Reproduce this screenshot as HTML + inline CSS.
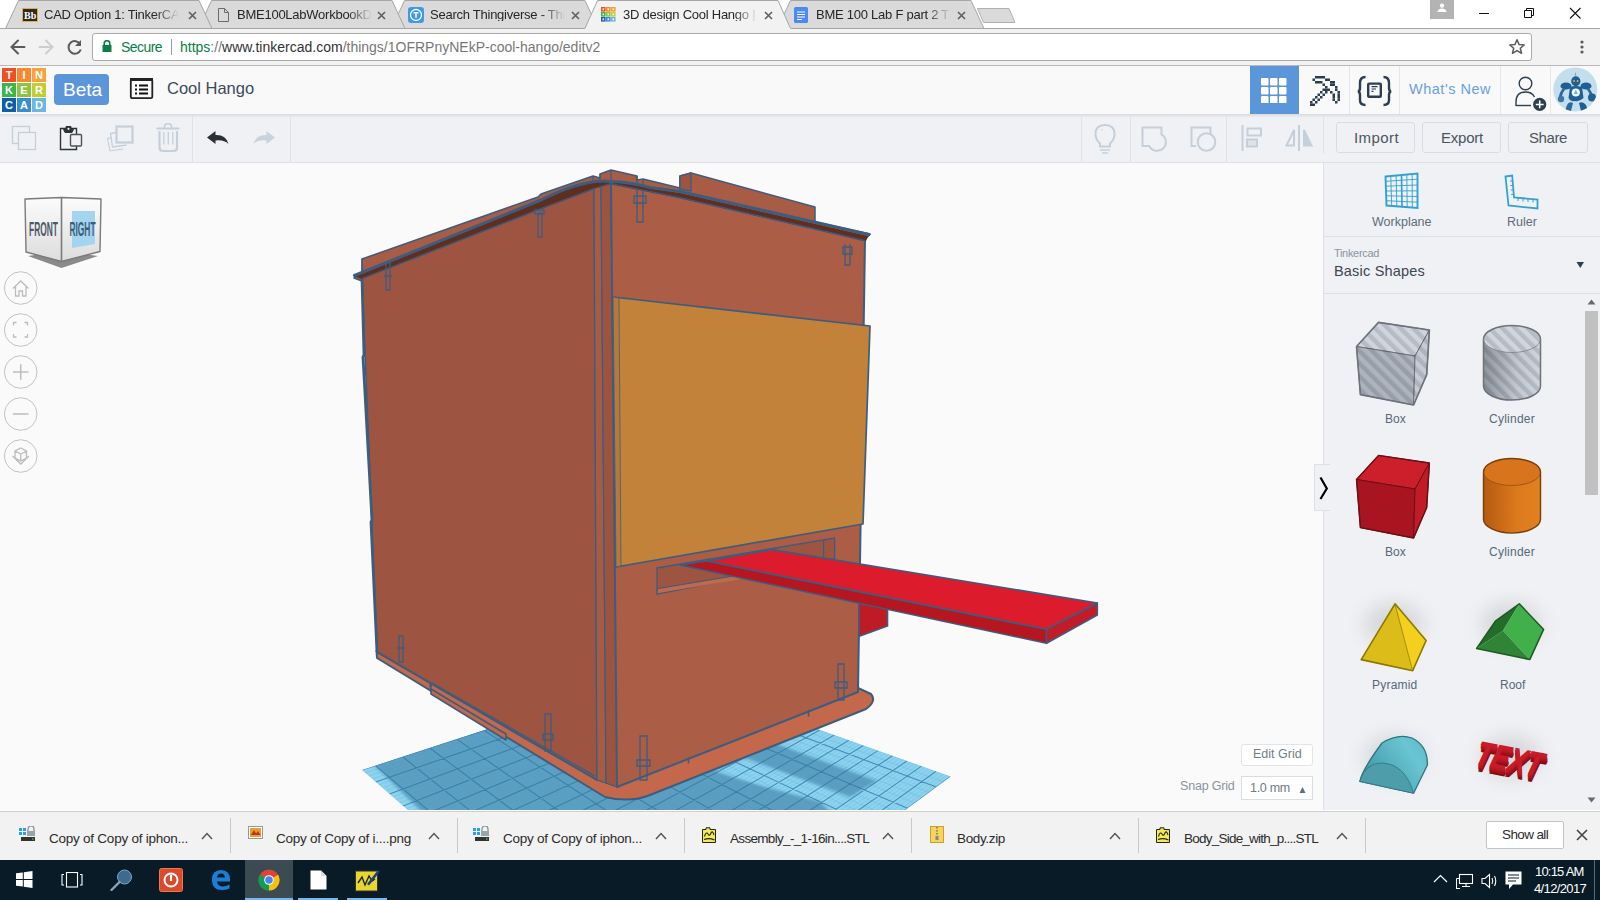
<!DOCTYPE html>
<html><head><meta charset="utf-8">
<style>
*{box-sizing:border-box;margin:0;padding:0}
html,body{width:1600px;height:900px;overflow:hidden;background:#fff;font-family:"Liberation Sans",sans-serif}
.a{position:absolute}
.t{position:absolute;white-space:nowrap;line-height:1}
#chrome{left:0;top:29px;width:1600px;height:37px;background:#f2f2f2;border-bottom:1px solid #b9b9b9}
#omni{left:92px;top:33px;width:1440px;height:28px;background:#fff;border:1px solid #a9a9a9;border-radius:3px}
#hdr{left:0;top:66px;width:1600px;height:49px;background:#f9f9f9;border-bottom:1px solid #d9dce2;}
#tool{left:0;top:115px;width:1600px;height:48px;background:#f0f1f4;border-bottom:1px solid #dde1e6}
#view{left:0;top:163px;width:1323px;height:647px;background:#fafafa}
#panel{left:1323px;top:163px;width:277px;height:647px;background:#f0f1f4;border-left:1px solid #dde1e6}
#dl{left:0;top:811px;width:1600px;height:49px;background:#f2f2f2;border-top:1px solid #cfcfcf}
#task{left:0;top:860px;width:1600px;height:40px;background:#081b26}
.tabt{font-size:13px;letter-spacing:-0.25px;color:#262626;top:8px;width:135px;overflow:hidden;-webkit-mask-image:linear-gradient(90deg,#000 82%,transparent)}
</style></head><body>
<!-- ===== TAB STRIP ===== -->
<svg class="a" style="left:0;top:0" width="1600" height="29" viewBox="0 0 1600 29">
<rect width="1600" height="29" fill="#ffffff"/>
<path d="M983.5 22.5 L977.5 8.5 L1009 8.5 L1015 22.5 Z" fill="#dadada" stroke="#b0b0b0"/>
<path d="M777.5 28.5 L790.5 0.5 L971 0.5 L984 28.5" fill="#dadada" stroke="#a6a6a6"/>
<path d="M391.5 28.5 L404.5 0.5 L585 0.5 L598 28.5" fill="#dadada" stroke="#a6a6a6"/>
<path d="M198.5 28.5 L211.5 0.5 L392 0.5 L405 28.5" fill="#dadada" stroke="#a6a6a6"/>
<path d="M5.5 28.5 L18.5 0.5 L199 0.5 L212 28.5" fill="#dadada" stroke="#a6a6a6"/>
<line x1="0" y1="28.5" x2="1600" y2="28.5" stroke="#a6a6a6"/>
<path d="M584.5 29.5 L597.5 0.5 L778 0.5 L791 29.5" fill="#f2f2f2" stroke="#a6a6a6"/>
<rect x="585.5" y="28" width="205" height="2" fill="#f2f2f2"/>
</svg>
<!-- favicons + titles -->
<svg class="a" style="left:22px;top:8px" width="16" height="14"><rect x="0.5" y="0.5" width="15" height="13" fill="#2b2b2b" stroke="#e0b040"/><text x="2" y="11" font-family="Liberation Serif" font-weight="bold" font-size="10" fill="#fff">Bb</text></svg>
<div class="t tabt" style="left:44px">CAD Option 1: TinkerCAD</div>
<svg class="a" style="left:188px;top:11px" width="9" height="9"><path d="M1 1L8 8M8 1L1 8" stroke="#5f5f5f" stroke-width="1.6"/></svg>
<svg class="a" style="left:218px;top:8px" width="11" height="14"><path d="M0.5 0.5h6l4 4v9h-10z M6.5 0.5v4h4" fill="none" stroke="#6a6a6a"/></svg>
<div class="t tabt" style="left:237px">BME100LabWorkbookDMedina</div>
<svg class="a" style="left:377px;top:11px" width="9" height="9"><path d="M1 1L8 8M8 1L1 8" stroke="#5f5f5f" stroke-width="1.6"/></svg>
<svg class="a" style="left:408px;top:7px" width="16" height="16"><rect width="16" height="16" rx="3" fill="#3d9ae8"/><circle cx="8" cy="8" r="5.5" fill="none" stroke="#fff" stroke-width="1.3"/><path d="M5.5 5.8h5M8 5.8v5" stroke="#fff" stroke-width="1.4"/></svg>
<div class="t tabt" style="left:430px">Search Thingiverse - Thingiverse</div>
<svg class="a" style="left:571px;top:11px" width="9" height="9"><path d="M1 1L8 8M8 1L1 8" stroke="#5f5f5f" stroke-width="1.6"/></svg>
<svg class="a" style="left:600px;top:6px" width="16" height="16"><rect x="1" y="1" width="4.6" height="4.6" fill="#f04e23"/><rect x="2.5" y="2.3" width="1.6" height="2" fill="#fff" fill-opacity="0.85"/><rect x="6" y="1" width="4.6" height="4.6" fill="#f7882f"/><rect x="7.5" y="2.3" width="1.6" height="2" fill="#fff" fill-opacity="0.85"/><rect x="11" y="1" width="4.6" height="4.6" fill="#f79a2f"/><rect x="12.5" y="2.3" width="1.6" height="2" fill="#fff" fill-opacity="0.85"/><rect x="1" y="6" width="4.6" height="4.6" fill="#3db54a"/><rect x="2.5" y="7.3" width="1.6" height="2" fill="#fff" fill-opacity="0.85"/><rect x="6" y="6" width="4.6" height="4.6" fill="#8dc63f"/><rect x="7.5" y="7.3" width="1.6" height="2" fill="#fff" fill-opacity="0.85"/><rect x="11" y="6" width="4.6" height="4.6" fill="#c1cf3a"/><rect x="12.5" y="7.3" width="1.6" height="2" fill="#fff" fill-opacity="0.85"/><rect x="1" y="11" width="4.6" height="4.6" fill="#1560a8"/><rect x="2.5" y="12.3" width="1.6" height="2" fill="#fff" fill-opacity="0.85"/><rect x="6" y="11" width="4.6" height="4.6" fill="#3a8fd0"/><rect x="7.5" y="12.3" width="1.6" height="2" fill="#fff" fill-opacity="0.85"/><rect x="11" y="11" width="4.6" height="4.6" fill="#6ab5e0"/><rect x="12.5" y="12.3" width="1.6" height="2" fill="#fff" fill-opacity="0.85"/></svg>
<div class="t tabt" style="left:623px">3D design Cool Hango | Tinkercad</div>
<svg class="a" style="left:764px;top:11px" width="9" height="9"><path d="M1 1L8 8M8 1L1 8" stroke="#5f5f5f" stroke-width="1.6"/></svg>
<svg class="a" style="left:794px;top:7px" width="14" height="16"><rect width="14" height="16" rx="1.5" fill="#4a8af4"/><path d="M3 5h8M3 7.5h8M3 10h8M3 12.5h5" stroke="#fff" stroke-width="1"/></svg>
<div class="t tabt" style="left:816px">BME 100 Lab F part 2 TInkercad</div>
<svg class="a" style="left:957px;top:11px" width="9" height="9"><path d="M1 1L8 8M8 1L1 8" stroke="#5f5f5f" stroke-width="1.6"/></svg>
<!-- window controls -->
<div class="a" style="left:1430px;top:0;width:24px;height:19px;background:#b3b3b3"></div>
<svg class="a" style="left:1430px;top:0" width="24" height="19"><circle cx="12" cy="5.6" r="2.2" fill="#fff"/><path d="M7.5 12 Q8 8.5 12 8.5 Q16 8.5 16.5 12 Z" fill="#fff"/></svg>
<div class="a" style="left:1479px;top:13px;width:10px;height:1px;background:#111"></div>
<svg class="a" style="left:1522px;top:6px" width="14" height="14"><path d="M2.5 4.5h7v7h-7z M4.5 4.5v-2h7v7h-2" fill="none" stroke="#111"/></svg>
<svg class="a" style="left:1569px;top:7px" width="13" height="13"><path d="M1 1L11.5 11.5M11.5 1L1 11.5" stroke="#111" stroke-width="1.1"/></svg>

<!-- ===== CHROME TOOLBAR ===== -->
<div id="chrome" class="a"></div>
<svg class="a" style="left:8px;top:37px" width="80" height="20">
<path d="M3.5 10h13M10 3.5L3.5 10L10 16.5" fill="none" stroke="#5a5a5a" stroke-width="2" stroke-linecap="round"/>
<path d="M31.5 10h13M38 3.5L44.5 10L38 16.5" fill="none" stroke="#cdcdcd" stroke-width="2" stroke-linecap="round"/>
<path d="M72.3 7.2 A6.3 6.3 0 1 0 72.8 12.5" fill="none" stroke="#5a5a5a" stroke-width="2"/>
<path d="M73 3 L73 9 L67 9 Z" fill="#5a5a5a"/>
</svg>
<div id="omni" class="a"></div>
<svg class="a" style="left:102px;top:40px" width="10" height="12"><path d="M2.2 5V3.5a2.8 2.8 0 0 1 5.6 0V5" fill="none" stroke="#0b8043" stroke-width="1.6"/><rect x="0.5" y="5" width="9" height="7" fill="#0b8043"/></svg>
<div class="t" style="left:121px;top:40px;font-size:14px;color:#0b8043;letter-spacing:-0.57px">Secure</div>
<div class="a" style="left:171px;top:39px;width:1px;height:16px;background:#9a9a9a"></div>
<div class="t" id="url" style="left:180px;top:40px;font-size:14px;color:#777"><span style="color:#0b8043">https</span>://<span style="color:#333">www.tinkercad.com</span>/things/1OFRPnyNEkP-cool-hango/editv2</div>
<svg class="a" style="left:1508px;top:38px" width="18" height="18"><path d="M9 1.8 L11.1 6.6 L16.2 7 L12.3 10.3 L13.5 15.3 L9 12.6 L4.5 15.3 L5.7 10.3 L1.8 7 L6.9 6.6 Z" fill="none" stroke="#5a5a5a" stroke-width="1.5" stroke-linejoin="round"/></svg>
<svg class="a" style="left:1579px;top:39px" width="6" height="16"><circle cx="3" cy="3" r="1.6" fill="#5a5a5a"/><circle cx="3" cy="8" r="1.6" fill="#5a5a5a"/><circle cx="3" cy="13" r="1.6" fill="#5a5a5a"/></svg>

<!-- ===== TINKERCAD HEADER ===== -->
<div id="hdr" class="a"></div>
<svg class="a" style="left:2px;top:68px" width="44" height="44" font-family="Liberation Sans" font-weight="bold" font-size="11" fill="#fff" text-anchor="middle">
<rect x="0" y="0" width="14" height="14" fill="#f04e23"/><rect x="15" y="0" width="14" height="14" fill="#f7882f"/><rect x="30" y="0" width="14" height="14" fill="#f8a33a"/>
<rect x="0" y="15" width="14" height="14" fill="#3cb54a"/><rect x="15" y="15" width="14" height="14" fill="#8bc53f"/><rect x="30" y="15" width="14" height="14" fill="#c3cd36"/>
<rect x="0" y="30" width="14" height="14" fill="#0f5ea8"/><rect x="15" y="30" width="14" height="14" fill="#3d8dcd"/><rect x="30" y="30" width="14" height="14" fill="#6db8e0"/>
<text x="7" y="11">T</text><text x="22" y="11">I</text><text x="37" y="11">N</text>
<text x="7" y="26">K</text><text x="22" y="26">E</text><text x="37" y="26">R</text>
<text x="7" y="41">C</text><text x="22" y="41">A</text><text x="37" y="41">D</text>
</svg>
<div class="a" style="left:54px;top:74px;width:55px;height:31px;background:#5c96da;border-radius:4px"></div>
<div class="t" style="left:63px;top:80px;font-size:19px;color:#fff">Beta</div>
<svg class="a" style="left:129px;top:77px" width="26" height="24"><rect x="1.8" y="2.2" width="21.5" height="19" rx="1.5" fill="none" stroke="#222" stroke-width="1.8"/><rect x="1" y="1" width="23" height="3" fill="#222"/>
<rect x="6" y="7.5" width="2" height="2" fill="#111"/><rect x="10" y="7.5" width="9" height="2" fill="#111"/>
<rect x="6" y="11.5" width="2" height="2" fill="#111"/><rect x="10" y="11.5" width="9" height="2" fill="#111"/>
<rect x="6" y="15.5" width="2" height="2" fill="#111"/><rect x="10" y="15.5" width="9" height="2" fill="#111"/></svg>
<div class="t" style="left:167px;top:80px;font-size:16.5px;color:#3a4b5d">Cool Hango</div>
<div class="a" style="left:1250px;top:66px;width:49px;height:48px;background:#5c96da"></div>
<svg class="a" style="left:1261px;top:78px" width="26" height="25" fill="#fff"><rect x="0" y="0" width="7.5" height="7.5" rx="1"/><rect x="9" y="0" width="7.5" height="7.5" rx="1"/><rect x="18" y="0" width="7.5" height="7.5" rx="1"/><rect x="0" y="9" width="7.5" height="7.5" rx="1"/><rect x="9" y="9" width="7.5" height="7.5" rx="1"/><rect x="18" y="9" width="7.5" height="7.5" rx="1"/><rect x="0" y="18" width="7.5" height="7.5" rx="1"/><rect x="9" y="18" width="7.5" height="7.5" rx="1"/><rect x="18" y="18" width="7.5" height="7.5" rx="1"/></svg>
<svg class="a" style="left:1310px;top:76px" width="30" height="30" fill="#2d3e50"><rect x="5.0" y="0.0" width="10.0" height="2.5"/><rect x="2.5" y="2.5" width="2.5" height="2.5"/><rect x="15.0" y="2.5" width="5.0" height="2.5"/><rect x="5.0" y="5.0" width="7.5" height="2.5"/><rect x="20.0" y="5.0" width="5.0" height="2.5"/><rect x="12.5" y="7.5" width="2.5" height="2.5"/><rect x="20.0" y="7.5" width="5.0" height="2.5"/><rect x="15.0" y="10.0" width="2.5" height="2.5"/><rect x="25.0" y="10.0" width="2.5" height="2.5"/><rect x="12.5" y="12.5" width="7.5" height="2.5"/><rect x="25.0" y="12.5" width="2.5" height="2.5"/><rect x="10.0" y="15.0" width="2.5" height="2.5"/><rect x="15.0" y="15.0" width="2.5" height="2.5"/><rect x="20.0" y="15.0" width="2.5" height="2.5"/><rect x="27.5" y="15.0" width="2.5" height="2.5"/><rect x="7.5" y="17.5" width="2.5" height="2.5"/><rect x="12.5" y="17.5" width="2.5" height="2.5"/><rect x="22.5" y="17.5" width="2.5" height="2.5"/><rect x="27.5" y="17.5" width="2.5" height="2.5"/><rect x="5.0" y="20.0" width="2.5" height="2.5"/><rect x="10.0" y="20.0" width="2.5" height="2.5"/><rect x="22.5" y="20.0" width="2.5" height="2.5"/><rect x="27.5" y="20.0" width="2.5" height="2.5"/><rect x="2.5" y="22.5" width="2.5" height="2.5"/><rect x="7.5" y="22.5" width="2.5" height="2.5"/><rect x="22.5" y="22.5" width="2.5" height="2.5"/><rect x="27.5" y="22.5" width="2.5" height="2.5"/><rect x="0.0" y="25.0" width="2.5" height="2.5"/><rect x="5.0" y="25.0" width="2.5" height="2.5"/><rect x="25.0" y="25.0" width="2.5" height="2.5"/><rect x="0.0" y="27.5" width="5.0" height="2.5"/></svg>
<svg class="a" style="left:1356px;top:75px" width="38" height="32" fill="none" stroke="#2d3e50" stroke-width="2.4">
<path d="M9.5 2 Q4 2 4 8 L4 13 Q4 16 2 16.5 Q4 17 4 20 L4 25 Q4 30 9.5 30"/>
<path d="M27.5 2 Q33 2 33 8 L33 13 Q33 16 35 16.5 Q33 17 33 20 L33 25 Q33 30 27.5 30"/>
<rect x="12.2" y="8.6" width="12.6" height="13.2" rx="0.8"/>
<path d="M15.5 11.6h6M15.5 14h4.5M15.5 16.4h2" stroke-width="1.1"/></svg>
<div class="t" style="left:1409px;top:82px;font-size:14.5px;color:#6a9fe0;letter-spacing:0.51px">What's New</div>
<svg class="a" style="left:1512px;top:74px" width="36" height="38"><circle cx="13.5" cy="9.5" r="6.3" fill="none" stroke="#2d3e50" stroke-width="1.4"/><path d="M4 32 L4 28 Q4 18 13.5 18 Q20 18 22.5 23" fill="none" stroke="#2d3e50" stroke-width="1.4"/><path d="M4 31.5 H19" stroke="#2d3e50" stroke-width="1.4"/><circle cx="27.7" cy="30.4" r="6.6" fill="#2d3e50"/><path d="M27.7 26.5v7.8M23.8 30.4h7.8" stroke="#fff" stroke-width="1.5"/></svg>
<svg class="a" style="left:1553px;top:67px" width="46" height="46"><defs><clipPath id="avc"><circle cx="22.3" cy="22.4" r="22"/></clipPath></defs><circle cx="22.3" cy="22.4" r="22" fill="#c3deec"/>
<g clip-path="url(#avc)" fill="#1f5f94">
<path d="M22.5 5 L23.3 8.5 L21.7 8.5 Z" fill="#6a9cc4"/>
<ellipse cx="22.8" cy="14.2" rx="4.6" ry="5"/>
<ellipse cx="13" cy="19" rx="5.5" ry="3.6"/><ellipse cx="33" cy="19" rx="5.5" ry="3.6"/>
<path d="M17 20 Q22.5 18 29 20 L30.5 31 Q26 35 22.5 34 Q18 35 15.5 31 Z"/>
<path d="M10 21 Q6 26 6 30 L8.5 31 Q9 26 12.5 22 Z" fill="#2a6a9c"/><path d="M36 21 Q40 26 40 30 L37.5 31 Q37 26 33.5 22 Z" fill="#2a6a9c"/>
<circle cx="8" cy="32" r="3.2" fill="#3a78a8"/><circle cx="39" cy="30.5" r="4" />
<path d="M14 38 Q16 34 20 36 L18 44 L12 44 Z" fill="#2a6a9c"/><path d="M26 36 Q30 34 33 38 L35 44 L28 44 Z"/>
</g>
<circle cx="22.8" cy="25.5" r="4.1" fill="#eef6fa"/><path d="M22.8 22.8 L24.8 27 H20.8 Z" fill="#7fb0d4"/>
<circle cx="21" cy="14" r="0.9" fill="#f3b03a"/><circle cx="24.6" cy="14" r="0.9" fill="#f3b03a"/></svg>
<div class="a" style="left:1349px;top:66px;width:1px;height:48px;background:#e4e6ea"></div>
<div class="a" style="left:1399px;top:66px;width:1px;height:48px;background:#e4e6ea"></div>
<div class="a" style="left:1500px;top:66px;width:1px;height:48px;background:#e4e6ea"></div>
<div class="a" style="left:1550px;top:66px;width:1px;height:48px;background:#e4e6ea"></div>

<!-- ===== TOOLBAR ===== -->
<div id="tool" class="a"></div>
<div class="a" style="left:0;top:115px;width:1600px;height:3px;background:linear-gradient(rgba(60,70,90,0.09),rgba(60,70,90,0))"></div>
<svg class="a" style="left:0;top:114px" width="1600" height="49" fill="none">
<g stroke="#c5cfd9" stroke-width="1.3">
<rect x="12.5" y="12.5" width="17" height="17"/><rect x="18.5" y="18.5" width="17" height="17" fill="#f0f1f4"/>
<path d="M114 23.5 L107.5 24.5 L110 37 L123 35" stroke-width="1.1"/><path d="M116 18.5 L110.5 19.5 L112.5 33 L126.5 31 L126 18 Z" fill="#f0f1f4" stroke="none"/><path d="M116 18.5 L110.5 19.5 L112.5 33 L126.5 31" stroke-width="1.3"/>
<rect x="116.5" y="12.5" width="16" height="16" fill="#f0f1f4" stroke-width="2.2"/>
<path d="M157.5 14.5h21" stroke-width="2.2" stroke-linecap="round"/><path d="M164.5 14 V12.5 Q164.5 9.8 168 9.8 Q171.5 9.8 171.5 12.5 V14" stroke-width="1.6"/>
<path d="M159.5 17 V33.5 Q159.5 37 163 37 H173.5 Q177 37 177 33.5 V17" stroke-width="2.2"/>
<path d="M163.8 18v12.5 M168.3 18v12.5 M172.8 18v12.5" stroke-width="1.3"/>
</g>
<g stroke="#2d3436" stroke-width="1.4">
<path d="M76.5 20 V14.5 H60.5 V35.5 H76.5 V32" fill="none"/>
<path d="M63.5 15.5 L65 18.5 H72 L73.5 15.5 H71 V12.5 H66 V15.5 Z" fill="#2d3436" stroke-width="1"/>
<circle cx="68.5" cy="14.8" r="1.1" fill="#f0f1f4" stroke="none"/>
<rect x="70.5" y="20.5" width="11" height="11.5" rx="1" fill="#f0f1f4" stroke="#4a5256"/>
</g>
<path d="M207 23.5 L215.5 17 L215.5 21 Q226 20.5 228.5 30 Q224 25.5 215.5 26.5 L215.5 30 Z" fill="#2a3136"/>
<path d="M275 23.5 L266.5 17 L266.5 21 Q256 20.5 253.5 30 Q258 25.5 266.5 26.5 L266.5 30 Z" fill="#c9d3dd"/>
<g stroke="#c5cfd9" stroke-width="2">
<g transform="translate(0 1.5)"><path d="M1100 28 Q1095.5 24 1095.5 18.5 Q1095.5 9.5 1105 9.5 Q1114.5 9.5 1114.5 18.5 Q1114.5 24 1110 28 V31 H1100 Z"/><path d="M1100 34.5h10 M1102 37.5h6" stroke-width="1.6"/><path d="M1101.5 15 L1103 13.5" stroke-width="1"/></g>
<path d="M1142.5 13.5 H1161.5 V20.44 A8.8 8.8 0 1 1 1149.2 32 H1142.5 Z"/>
<path d="M1196 32 H1191.5 V13.5 H1210.5 V20"/><circle cx="1206.5" cy="28" r="8.8"/>
<path d="M1242.5 11v26"/><rect x="1247.5" y="14.5" width="13.5" height="7"/><rect x="1247" y="25.5" width="10" height="7" fill="#dde3e9"/>
<path d="M1299 11v26"/><path d="M1294 16 L1286.5 31.5 H1294 Z"/><path d="M1304 16 L1311.5 31.5 H1304 Z" fill="#c5cfd9"/>
</g>
<g stroke="#dfe3e8" stroke-width="1"><path d="M192.5 0v49 M290.5 0v49 M1081.5 0v49 M1130.5 0v49 M1226.5 0v49 M1323.5 0v40"/></g>
</svg>
<div class="a" style="left:1336px;top:122px;width:79px;height:31px;border:1px solid #d9dde3;border-radius:3px;background:#f0f1f4"></div>
<div class="a" style="left:1422px;top:122px;width:79px;height:31px;border:1px solid #d9dde3;border-radius:3px;background:#f0f1f4"></div>
<div class="a" style="left:1508px;top:122px;width:80px;height:31px;border:1px solid #d9dde3;border-radius:3px;background:#f0f1f4"></div>
<div class="t" style="left:1354px;top:130px;font-size:15px;color:#4b5561;letter-spacing:0.42px">Import</div>
<div class="t" style="left:1441px;top:130px;font-size:15px;color:#4b5561;letter-spacing:-0.23px">Export</div>
<div class="t" style="left:1529px;top:130px;font-size:15px;color:#4b5561;letter-spacing:-0.40px">Share</div>

<!-- ===== VIEWPORT ===== -->
<div id="view" class="a"></div>
<svg class="a" style="left:0;top:163px" width="1323" height="647" viewBox="0 163 1323 647">
<defs><filter id="sb" x="-10%" y="-10%" width="120%" height="120%"><feGaussianBlur stdDeviation="1.8"/></filter><clipPath id="gclip"><path d="M362 770 L660 673 L950.6 776.5 L635.6 1009 Z"/></clipPath></defs>
<!-- grid plane -->
<g clip-path="url(#gclip)">
<rect x="300" y="650" width="700" height="400" fill="#8cd3ef"/>
<path d="M374 765 L660 670 L745 758 L715 771 L832 812 L422 812 Z" fill="#5c9fc1" filter="url(#sb)"/>
<path d="M690 712 L877 781 L850 797 L670 730 Z" fill="#5b9ec0" filter="url(#sb)"/>
<path d="M600 745 L819 801 L830 812 L590 812 Z" fill="#5b9ec0" filter="url(#sb)"/>
<path d="M382.3 763.4L657.1 993.1M389.1 761.2L664.2 987.9M395.9 759.0L671.4 982.6M409.4 754.6L685.7 972.0M416.2 752.4L692.9 966.7M423.0 750.2L700.0 961.4M436.5 745.8L714.4 950.9M443.3 743.5L721.5 945.6M450.0 741.3L728.7 940.3M463.6 736.9L743.0 929.7M470.4 734.7L750.1 924.5M477.1 732.5L757.3 919.2M490.7 728.1L771.6 908.6M497.5 725.9L778.8 903.3M504.2 723.7L785.9 898.0M517.8 719.3L800.3 887.5M524.5 717.1L807.4 882.2M531.3 714.9L814.6 876.9M544.9 710.5L828.9 866.3M551.6 708.3L836.1 861.0M558.4 706.1L843.2 855.8M572.0 701.7L857.5 845.2M578.7 699.5L864.7 839.9M585.5 697.2L871.9 834.6M599.0 692.8L886.2 824.1M605.8 690.6L893.3 818.8M612.6 688.4L900.5 813.5M626.1 684.0L914.8 802.9M632.9 681.8L922.0 797.6M639.7 679.6L929.1 792.4M653.2 675.2L943.4 781.8M660.0 673.0L950.6 776.5M666.8 670.8L957.8 771.2M365.4 773.0L663.6 674.3M368.8 776.0L667.3 675.6M372.3 779.0L670.9 676.9M379.1 784.9L678.2 679.5M382.5 787.9L681.8 680.8M385.9 790.9L685.4 682.1M392.8 796.9L692.7 684.6M396.2 799.9L696.3 685.9M399.6 802.9L700.0 687.2M406.5 808.8L707.2 689.8M409.9 811.8L710.9 691.1M413.3 814.8L714.5 692.4M420.1 820.8L721.8 695.0M423.6 823.8L725.4 696.3M427.0 826.8L729.0 697.6M433.8 832.7L736.3 700.2M437.2 835.7L739.9 701.5M440.7 838.7L743.5 702.8M447.5 844.7L750.8 705.3M450.9 847.7L754.4 706.6M454.3 850.7L758.1 707.9M461.2 856.6L765.3 710.5M464.6 859.6L769.0 711.8M468.0 862.6L772.6 713.1M474.9 868.6L779.9 715.7M478.3 871.6L783.5 717.0M481.7 874.6L787.1 718.3M488.5 880.5L794.4 720.9M492.0 883.5L798.0 722.2M495.4 886.5L801.7 723.5M502.2 892.5L808.9 726.0M505.6 895.5L812.6 727.3M509.1 898.5L816.2 728.6M515.9 904.4L823.5 731.2M519.3 907.4L827.1 732.5M522.7 910.4L830.7 733.8M529.6 916.4L838.0 736.4M533.0 919.4L841.6 737.7M536.4 922.4L845.3 739.0M543.3 928.3L852.5 741.6M546.7 931.3L856.2 742.9M550.1 934.3L859.8 744.2M556.9 940.3L867.1 746.7M560.4 943.3L870.7 748.0M563.8 946.3L874.3 749.3M570.6 952.2L881.6 751.9M574.0 955.2L885.2 753.2M577.5 958.2L888.8 754.5M584.3 964.2L896.1 757.1M587.7 967.2L899.7 758.4M591.1 970.2L903.4 759.7M598.0 976.1L910.6 762.3M601.4 979.1L914.3 763.6M604.8 982.1L917.9 764.9M611.7 988.1L925.2 767.4M615.1 991.1L928.8 768.7M618.5 994.1L932.4 770.0M625.3 1000.0L939.7 772.6M628.8 1003.0L943.3 773.9M632.2 1006.0L947.0 775.2" stroke="#4aa0cc" stroke-width="0.5" stroke-opacity="0.45" fill="none"/>
<path d="M375.5 765.6L649.9 998.4M402.6 756.8L678.6 977.3M429.7 748.0L707.2 956.2M456.8 739.1L735.8 935.0M483.9 730.3L764.5 913.9M511.0 721.5L793.1 892.8M538.1 712.7L821.7 871.6M565.2 703.9L850.4 850.5M592.3 695.0L879.0 829.3M619.4 686.2L907.6 808.2M646.5 677.4L936.3 787.1M673.5 668.6L964.9 765.9M362.0 770.0L660.0 673.0M375.7 782.0L674.5 678.2M389.4 793.9L689.1 683.4M403.0 805.9L703.6 688.5M416.7 817.8L718.1 693.7M430.4 829.8L732.6 698.9M444.1 841.7L747.2 704.0M457.8 853.6L761.7 709.2M471.4 865.6L776.2 714.4M485.1 877.6L790.8 719.6M498.8 889.5L805.3 724.8M512.5 901.5L819.8 729.9M526.2 913.4L834.4 735.1M539.8 925.4L848.9 740.3M553.5 937.3L863.4 745.5M567.2 949.2L878.0 750.6M580.9 961.2L892.5 755.8M594.6 973.1L907.0 761.0M608.2 985.1L921.5 766.1M621.9 997.0L936.1 771.3M635.6 1009.0L950.6 776.5" stroke="#2d78a6" stroke-width="1.1" stroke-opacity="0.75" fill="none"/>
</g>
<!-- base plate -->
<path d="M376.5 651 L597 779 L617 786 L858 688 L871 694 Q877 701 866 709 L650 795 Q630 803 605 797 L377 658 Z" fill="#c4684b" stroke="#3d5d7e" stroke-width="2" stroke-linejoin="round"/>
<path d="M431 689 L506 734 L506 740 L431 694 Z" fill="#c4684b" stroke="#3d5d7e" stroke-width="1.6" stroke-linejoin="round"/>
<path d="M430 684 L431 690" stroke="#3d5d7e" stroke-width="1.6"/>
<!-- back silhouette above rail -->
<path d="M354 278 L362 273 L362 259 L538 197 L541 194 L593 176 L600 178 L600 174 L611 170 L637 176 L637 180 L643 179 L680 188 L680 176 L691 173 L815 207 L815 222 L870 234 L865 240 L611 184 L595 190 L362 281 Z" fill="#a95c45" stroke="#3d5d7e" stroke-width="1.5" stroke-linejoin="round"/>
<path d="M362 259 V277 M593 176 V189 M600 174 V186 M611 170 V184 M637 176 V186 M643 179 V188 M680 176 V188" stroke="#3d5d7e" stroke-width="1.2"/>
<!-- left face -->
<path d="M362 278 L541 208.5 L594 188.5 L597 780 L377 652 Z" fill="#9d5541" stroke="#3d5d7e" stroke-width="1.6" stroke-linejoin="round"/>
<path d="M362 278 L364 355 L363 357 L372 520 L371 522 L377 652" fill="none" stroke="#3d5d7e" stroke-width="2.8"/>
<path d="M377 652 L597 780" fill="none" stroke="#3d5d7e" stroke-width="2"/>
<!-- corner posts -->
<path d="M594 188.5 L601 186 L606 783 L597 780 Z" fill="#a85b44" stroke="#3d5d7e" stroke-width="1.2"/>
<path d="M601 186 L611 183.5 L617 787 L606 783 Z" fill="#9c5440" stroke="#3d5d7e" stroke-width="1.2"/>
<!-- right face -->
<path d="M611 183.5 L680 197.5 L865 240.5 L858 692 L617 787 Z" fill="#ab5d46" stroke="#3d5d7e" stroke-width="2" stroke-linejoin="round"/>
<!-- rail -->
<path d="M680 176 L691 173 L691 191 L680 189 Z" fill="#9d5541" stroke="#3d5d7e" stroke-width="1.3" stroke-linejoin="round"/>
<path d="M355 276.5 L541 201 Q585 179 611 182.5 Q630 183 650 188.5 L680 193 L868 236 L866 241 L680 198 L611 184 L594 189 L541 209 L362 279 Z" fill="#5e2e20"/>
<path d="M354.5 275.5 L541 200 Q585 178 611 181.5 Q630 182 650 187.5 L680 191.5 L869 234.5" fill="none" stroke="#3d5d7e" stroke-width="3" stroke-linecap="round" stroke-linejoin="round"/>
<path d="M362 278.5 L541 208.5 L594 188.5 L611 183.5 L680 197.5 L865 240.5" fill="none" stroke="#3d5d7e" stroke-width="1.2"/>
<!-- orange panel -->
<path d="M613 297 L870 326 L863 524 L616 567 Z" fill="#c3823a" stroke="#3d5d7e" stroke-width="1.7" stroke-linejoin="round"/>
<path d="M613 297 L619 298 L621 566 L616 567 Z" fill="#b8783a" stroke="#3d5d7e" stroke-width="0.8"/>
<!-- slot -->
<path d="M657 568 L834.6 538 L834.6 558.5 L657 594.3 Z" fill="#9d5541" stroke="#3d5d7e" stroke-width="1.3"/>
<path d="M658 589 L760 572 L760 576 L658 593 Z" fill="#bf6a4d"/>
<path d="M658 588.5 L760 571.5" stroke="#3d5d7e" stroke-width="1"/>
<path d="M823.6 540 V557" stroke="#3d5d7e" stroke-width="1.2"/>
<!-- red block -->
<path d="M859 594 L887.5 588 L887.5 626 L859 636.3 Z" fill="#c01a27" stroke="#3d5d7e" stroke-width="1.6"/>
<!-- plank -->
<path d="M680 565 L707 561 L1046.5 629.3 L1046.5 643.3 Z" fill="#b5161f" stroke="#3d5d7e" stroke-width="1.6" stroke-linejoin="round"/>
<path d="M1046.5 629.3 L1097.3 603 L1097.3 615 L1046.5 643.3 Z" fill="#c31b28" stroke="#3d5d7e" stroke-width="1.6" stroke-linejoin="round"/>
<path d="M707 561 L772 549.6 L1097.3 603 L1046.5 629.3 Z" fill="#dc1c2c" stroke="#3d5d7e" stroke-width="1.6" stroke-linejoin="round"/>
<!-- clips -->
<g fill="none" stroke="#3d5d7e" stroke-width="1.3">
<path d="M386 262 V290 H390 V262 M384 276 H392"/>
<path d="M538 213 V237 H542 V213 H538 M535 210 H544 V214 H535 Z"/>
<path d="M637 190 V222 H643 V190 M634 196 H646 V203 H634 Z"/>
<path d="M845 244 V265 H850 V244 M843 247 H852 V254 H843 Z"/>
<path d="M399 636 V662 H403 V636 Z M397 648 H405"/>
<path d="M545 714 V751 H551 V714 Z M543 734 H553 V740 H543 Z"/>
<path d="M640 736 V780 H647 V736 Z M637 760 H650 V766 H637 Z"/>
<path d="M838 664 V700 H844 V664 Z M835 682 H847 V688 H835 Z"/>
</g>
<path d="M430 690 L432 683 L595 776" fill="none" stroke="#3d5d7e" stroke-width="1.2"/>
<path d="M808.5 710 V716.5 M688.5 757.5 V763.5" stroke="#3d5d7e" stroke-width="1.6"/>
</svg>
<!-- nav cube -->
<svg class="a" style="left:0;top:163px" width="130" height="310">
<defs><linearGradient id="cg" x1="0" y1="0" x2="0" y2="1"><stop offset="0" stop-color="#fcfcfc"/><stop offset="1" stop-color="#dcdcdc"/></linearGradient></defs>
<path d="M28 93 L61.5 105 L98 93 L61.5 88 Z" fill="#8a8a8a"/>
<path d="M25 36 L61.5 34.5 L101 36 L100 88.5 L61.5 98.5 L26 89 Z" fill="url(#cg)" stroke="#7a7a7a" stroke-width="1.4" stroke-linejoin="round"/>
<path d="M61.5 34.5 V98.5" stroke="#7a7a7a" stroke-width="1.6"/>
<path d="M72 48 L95 48 L95 81 L72 85 Z" fill="#a3d5f0"/>
<text x="0" y="0" font-family="Liberation Sans" font-weight="bold" font-size="19.5" fill="#4d5866" text-anchor="middle" transform="translate(43.5 73) scale(0.43 1)">FRONT</text>
<text x="0" y="0" font-family="Liberation Sans" font-weight="bold" font-size="19.5" fill="#3b5b7a" text-anchor="middle" transform="translate(82.5 73) scale(0.43 1)">RIGHT</text>
<g fill="none" stroke="#c3c3c3" stroke-width="1">
<circle cx="20.7" cy="125" r="16.3"/><circle cx="20.7" cy="167" r="16.3"/><circle cx="20.7" cy="209" r="16.3"/><circle cx="20.7" cy="251" r="16.3"/><circle cx="20.7" cy="293" r="16.3"/>
</g>
<g fill="none" stroke="#bdbdbd" stroke-width="1.3">
<path d="M13 125.5 L20.7 118 L28.5 125.5 M15.5 123 V133 H19 V128 H22.5 V133 H26 V123"/>
<path d="M13.5 162.5 V159.5 H16.5 M24.5 159.5 H27.5 V162.5 M27.5 171 V174 H24.5 M16.5 174 H13.5 V171"/>
<path d="M13 209 H28.5 M20.7 201.2 V216.8" stroke-width="1.5"/>
<path d="M13 251 H28.5" stroke-width="1.5"/>
<path d="M20.7 285 L26.5 288 V295 L20.7 298 L15 295 V288 Z M15 288 L20.7 291 L26.5 288 M20.7 291 V298 M12.5 293 L20.7 301 L29 293"/>
</g>
</svg>
<!-- edit grid / snap grid -->
<div class="a" style="left:1241px;top:744px;width:72px;height:22px;background:#fff;border:1px solid #e1e5ea;border-radius:3px"></div>
<div class="t" style="left:1253px;top:748px;font-size:12.5px;color:#717d89">Edit Grid</div>
<div class="t" style="left:1180px;top:780px;font-size:12.5px;color:#8a949e;letter-spacing:-0.20px">Snap Grid</div>
<div class="a" style="left:1241px;top:776px;width:72px;height:24px;background:#fff;border:1px solid #d9dee4"></div>
<div class="t" style="left:1250px;top:782px;font-size:12.5px;color:#6e7a86;letter-spacing:-0.28px">1.0 mm</div>
<svg class="a" style="left:1299px;top:786px" width="8" height="8"><path d="M0.5 7 L3.5 1 L6.5 7 Z" fill="#5c6f80"/></svg>

<div id="panel" class="a"></div>
<svg class="a" style="left:1384px;top:172px" width="36" height="38" fill="none" stroke="#2fa2d0">
<path d="M1.5 4.5 L33.5 1.5 L33.5 36 L2.5 33.5 Z" stroke-width="1.9"/><path d="M6.8 4.0L7.7 33.9" stroke-width="0.9"/><path d="M1.7 9.3L33.5 7.2" stroke-width="0.9"/><path d="M12.2 3.5L12.8 34.3" stroke-width="0.9"/><path d="M1.8 14.2L33.5 13.0" stroke-width="0.9"/><path d="M17.5 3.0L18.0 34.8" stroke-width="1.6"/><path d="M2.0 19.0L33.5 18.8" stroke-width="0.9"/><path d="M22.8 2.5L23.2 35.2" stroke-width="0.9"/><path d="M2.2 23.8L33.5 24.5" stroke-width="0.9"/><path d="M28.2 2.0L28.3 35.6" stroke-width="0.9"/><path d="M2.3 28.7L33.5 30.2" stroke-width="0.9"/>
</svg>
<div class="t" style="left:1372px;top:216px;font-size:12.5px;color:#5d6c7b">Workplane</div>
<svg class="a" style="left:1504px;top:174px" width="38" height="36" fill="none" stroke="#33a3cf">
<path d="M1.5 2.5 L8.2 1.5 L10 23.5 L33.5 25.5 L33.5 34.5 L4.5 31.5 Z" stroke-width="1.8"/>
<path d="M6 7h3 M6.4 11.5h3 M6.8 16h3 M7.2 20.5h3 M14 24v3 M19 24.5v3 M24 25v3 M29 25.5v3" stroke-width="1"/>
</svg>
<div class="t" style="left:1507px;top:216px;font-size:12.5px;color:#5d6c7b">Ruler</div>
<div class="a" style="left:1324px;top:236px;width:276px;height:1px;background:#dce1e7"></div>
<div class="t" style="left:1334px;top:248px;font-size:11px;color:#8a949e;letter-spacing:-0.32px">Tinkercad</div>
<div class="t" style="left:1334px;top:264px;font-size:14.5px;color:#3b4652;letter-spacing:0.19px">Basic Shapes</div>
<svg class="a" style="left:1576px;top:261px" width="9" height="8"><path d="M0.5 1 L8 1 L4.25 7 Z" fill="#2d3e50"/></svg>
<div class="a" style="left:1324px;top:293px;width:276px;height:1px;background:#dce1e7"></div>
<div class="a" style="left:1585px;top:311px;width:13px;height:184px;background:#c1c1c1"></div>
<svg class="a" style="left:1587px;top:299px" width="9" height="6"><path d="M0.5 5.5 L4.5 0.5 L8.5 5.5 Z" fill="#6a6a6a"/></svg>
<svg class="a" style="left:1587px;top:797px" width="9" height="6"><path d="M0.5 0.5 L4.5 5.5 L8.5 0.5 Z" fill="#6a6a6a"/></svg>
<div class="a" style="left:1314px;top:464px;width:16px;height:47px;background:#f0f1f4;border:1px solid #dde1e6;border-right:none"></div>
<svg class="a" style="left:1318px;top:476px" width="11" height="24"><path d="M2.5 1.5 L8.8 12.5 L2.5 23" fill="none" stroke="#000" stroke-width="2.2"/></svg>

<svg class="a" style="left:1324px;top:294px" width="260" height="516" viewBox="1324 294 260 516">
<defs>
<pattern id="st" patternUnits="userSpaceOnUse" width="9" height="9" patternTransform="rotate(-45)"><rect width="4.5" height="9" fill="#000" fill-opacity="0.12"/></pattern>
<filter id="bl" x="-50%" y="-50%" width="200%" height="200%"><feGaussianBlur stdDeviation="9"/></filter>
<linearGradient id="og" x1="0" x2="1"><stop offset="0" stop-color="#b65a10"/><stop offset="0.6" stop-color="#dc7a1e"/><stop offset="1" stop-color="#e3801f"/></linearGradient>
<linearGradient id="gg" x1="0" x2="1"><stop offset="0" stop-color="#8f969f"/><stop offset="0.6" stop-color="#c3c9d2"/><stop offset="1" stop-color="#cfd5de"/></linearGradient>
<linearGradient id="tg" x1="0" x2="1" y1="0.6" y2="0"><stop offset="0" stop-color="#3f97a6"/><stop offset="0.7" stop-color="#6ac5d3"/><stop offset="1" stop-color="#58b7c6"/></linearGradient>
</defs>
<g filter="url(#bl)" fill="#000" fill-opacity="0.10">
<ellipse cx="1394" cy="624" rx="30" ry="22"/><ellipse cx="1511" cy="624" rx="30" ry="22"/>
<ellipse cx="1394" cy="757" rx="30" ry="22"/><ellipse cx="1511" cy="757" rx="30" ry="22"/>
</g>
<!-- gray box -->
<g stroke="#6e737a" stroke-width="1" stroke-linejoin="round">
<path d="M1378.5 322.4 L1429.4 330 L1415 356 L1356.5 346.5 Z" fill="#cfd5df"/>
<path d="M1356.5 346.5 L1415 356 L1413.6 405 L1360.4 394.6 Z" fill="#adb4bf"/>
<path d="M1415 356 L1429.4 330 L1426.7 374.6 L1413.6 405 Z" fill="#c6ccd6"/>
<path d="M1378.5 322.4 L1429.4 330 L1426.7 374.6 L1413.6 405 L1360.4 394.6 L1356.5 346.5 Z" fill="url(#st)" stroke-width="1.6"/>
</g>
<!-- gray cylinder -->
<path d="M1483.5 339 V386 A28.3 14 0 0 0 1540.5 386 V339 Z" fill="url(#gg)"/>
<ellipse cx="1512" cy="339" rx="28.5" ry="13.5" fill="#d0d6df"/>
<path d="M1483.5 339 V386 A28.3 14 0 0 0 1540.5 386 V339 A28.5 13.5 0 0 0 1483.5 339 Z" fill="url(#st)" stroke="#6e737a" stroke-width="1.5"/>
<path d="M1483.5 339 A28.5 13.5 0 0 0 1540.5 339" fill="none" stroke="#7a8088" stroke-width="0.8"/>
<!-- red box -->
<g stroke="#6a1016" stroke-width="1" stroke-linejoin="round">
<path d="M1378.5 455.4 L1429.4 463 L1415 489 L1356.5 479.5 Z" fill="#cc1f2b"/>
<path d="M1356.5 479.5 L1415 489 L1413.6 538 L1360.4 527.6 Z" fill="#a8141f"/>
<path d="M1415 489 L1429.4 463 L1426.7 507.6 L1413.6 538 Z" fill="#c11b28"/>
<path d="M1378.5 455.4 L1429.4 463 L1426.7 507.6 L1413.6 538 L1360.4 527.6 L1356.5 479.5 Z" fill="none" stroke-width="1.4"/>
</g>
<!-- orange cylinder -->
<path d="M1483.5 472 V519 A28.3 14 0 0 0 1540.5 519 V472 Z" fill="url(#og)"/>
<ellipse cx="1512" cy="472" rx="28.5" ry="13.5" fill="#d8741b"/>
<path d="M1483.5 472 V519 A28.3 14 0 0 0 1540.5 519 V472 A28.5 13.5 0 0 0 1483.5 472 Z" fill="none" stroke="#7a3d08" stroke-width="1.4"/>
<path d="M1483.5 472 A28.5 13.5 0 0 0 1540.5 472" fill="none" stroke="#8a4a10" stroke-width="0.7"/>
<!-- pyramid -->
<g stroke="#8d7a00" stroke-linejoin="round">
<path d="M1395 603.8 L1361.2 659.6 L1412.7 670.7 Z" fill="#dcbc18" stroke-width="0.6"/>
<path d="M1395 603.8 L1412.7 670.7 L1426.1 640.5 Z" fill="#f2d01d" stroke-width="0.6"/>
<path d="M1395 603.8 L1361.2 659.6 L1412.7 670.7 L1426.1 640.5 Z" fill="none" stroke-width="1.6"/>
</g>
<!-- roof -->
<g stroke="#1d5a22" stroke-linejoin="round">
<path d="M1519.3 603.8 L1502.9 630.7 L1476.6 648.4 L1495.7 620.8 Z" fill="#246c2a" stroke-width="0"/>
<path d="M1519.3 603.8 L1543.6 629.4 L1529.8 659.6 L1502.9 630.7 Z" fill="#42b04a" stroke-width="0"/>
<path d="M1502.9 630.7 L1529.8 659.6 L1476.6 648.4 Z" fill="#2f8535" stroke-width="0"/>
<path d="M1519.3 603.8 L1543.6 629.4 L1529.8 659.6 L1476.6 648.4 L1495.7 620.8 Z" fill="none" stroke-width="1.5"/>
</g>
<!-- half cylinder -->
<path d="M1359.8 781.4 Q1362 770 1382 743 Q1398 733 1412 738 Q1428 746 1427.4 765 L1413.6 793.2 Z" fill="url(#tg)" stroke="#2e7480" stroke-width="1.3" stroke-linejoin="round"/>
<path d="M1359.8 781.4 Q1365 763 1382 763 Q1405 764 1413.6 793.2 Z" fill="#4e9dab" stroke="#2e7480" stroke-width="0.8"/>
<!-- TEXT -->
<g transform="translate(1471 765) rotate(11) skewX(-14) scale(0.8 1)" font-family="Liberation Sans" font-weight="bold" font-size="34" letter-spacing="-1">
<text x="4.0" y="5.0" fill="#7d0c14">TEXT</text><text x="3.2" y="3.7" fill="#8e0f18">TEXT</text><text x="2.4" y="2.4" fill="#9e121c">TEXT</text><text x="1.6" y="1.1" fill="#ae1520">TEXT</text><text x="0.8" y="-0.2" fill="#be1824">TEXT</text><text x="0" y="-2" fill="#c91b27">TEXT</text>
</g>
</svg>
<div class="t" style="left:1385px;top:413px;font-size:12px;color:#56687a">Box</div>
<div class="t" style="left:1489px;top:413px;font-size:12px;color:#56687a;letter-spacing:0.25px">Cylinder</div>
<div class="t" style="left:1385px;top:546px;font-size:12px;color:#56687a">Box</div>
<div class="t" style="left:1489px;top:546px;font-size:12px;color:#56687a;letter-spacing:0.25px">Cylinder</div>
<div class="t" style="left:1372px;top:679px;font-size:12px;color:#56687a;letter-spacing:0.21px">Pyramid</div>
<div class="t" style="left:1500px;top:679px;font-size:12px;color:#56687a">Roof</div>
<!-- ===== DOWNLOADS ===== -->
<div id="dl" class="a"></div>
<div class="a" style="left:230px;top:818px;width:1px;height:35px;background:#c9c9c9"></div>
<div class="a" style="left:457px;top:818px;width:1px;height:35px;background:#c9c9c9"></div>
<div class="a" style="left:684px;top:818px;width:1px;height:35px;background:#c9c9c9"></div>
<div class="a" style="left:911px;top:818px;width:1px;height:35px;background:#c9c9c9"></div>
<div class="a" style="left:1138px;top:818px;width:1px;height:35px;background:#c9c9c9"></div>
<div class="a" style="left:1365px;top:818px;width:1px;height:35px;background:#c9c9c9"></div>
<svg class="a" style="left:19px;top:826px" width="18" height="17"><rect x="0" y="2" width="3" height="3" fill="#2aa0e6"/><rect x="4" y="2" width="3" height="3" fill="#2aa0e6"/><rect x="0" y="6" width="3" height="3" fill="#2aa0e6"/><rect x="4" y="6" width="3" height="3" fill="#2aa0e6"/><path d="M9 5 V3 A3 3 0 0 1 15 3 V5" fill="none" stroke="#888" stroke-width="1.2"/><rect x="8" y="5" width="8" height="5" fill="#9aa4ad"/><rect x="2" y="11" width="14" height="4" fill="#333"/><rect x="13" y="12.5" width="1.5" height="1" fill="#4f4"/></svg>
<div class="t" style="left:49px;top:832px;font-size:13.5px;color:#2b2b2b;letter-spacing:-0.24px">Copy of Copy of iphon...</div>
<svg class="a" style="left:201px;top:832px" width="12" height="8"><path d="M1 7 L6 1.5 L11 7" fill="none" stroke="#555" stroke-width="1.5"/></svg>
<svg class="a" style="left:248px;top:826px" width="15" height="13"><rect x="0.5" y="0.5" width="14" height="12" fill="#fff" stroke="#999"/><rect x="2" y="2" width="11" height="9" fill="#e8a030"/><path d="M3 9 L6 4 L9 9 Z M7 9 L10 5 L12.5 9Z" fill="#c0302a"/></svg>
<div class="t" style="left:276px;top:832px;font-size:13.5px;color:#2b2b2b;letter-spacing:-0.25px">Copy of Copy of i....png</div>
<svg class="a" style="left:428px;top:832px" width="12" height="8"><path d="M1 7 L6 1.5 L11 7" fill="none" stroke="#555" stroke-width="1.5"/></svg>
<svg class="a" style="left:473px;top:826px" width="18" height="17"><rect x="0" y="2" width="3" height="3" fill="#2aa0e6"/><rect x="4" y="2" width="3" height="3" fill="#2aa0e6"/><rect x="0" y="6" width="3" height="3" fill="#2aa0e6"/><rect x="4" y="6" width="3" height="3" fill="#2aa0e6"/><path d="M9 5 V3 A3 3 0 0 1 15 3 V5" fill="none" stroke="#888" stroke-width="1.2"/><rect x="8" y="5" width="8" height="5" fill="#9aa4ad"/><rect x="2" y="11" width="14" height="4" fill="#333"/><rect x="13" y="12.5" width="1.5" height="1" fill="#4f4"/></svg>
<div class="t" style="left:503px;top:832px;font-size:13.5px;color:#2b2b2b;letter-spacing:-0.24px">Copy of Copy of iphon...</div>
<svg class="a" style="left:655px;top:832px" width="12" height="8"><path d="M1 7 L6 1.5 L11 7" fill="none" stroke="#555" stroke-width="1.5"/></svg>
<svg class="a" style="left:702px;top:827px" width="15" height="17"><path d="M0.5 2.5 H4 V0.8 H8 V2.5 H13.5 V15.5 H0.5 Z" fill="#f2ec50" stroke="#222"/><path d="M2.5 9.5 Q4 4 6 7 Q7.5 10 9 6 Q10.5 3 12 8 M2 12.5 Q7 10.5 12.5 13" fill="none" stroke="#222" stroke-width="1.1"/></svg>
<div class="t" style="left:730px;top:832px;font-size:13.5px;color:#2b2b2b;letter-spacing:-0.68px">Assembly_-_1-16in....STL</div>
<svg class="a" style="left:882px;top:832px" width="12" height="8"><path d="M1 7 L6 1.5 L11 7" fill="none" stroke="#555" stroke-width="1.5"/></svg>
<svg class="a" style="left:930px;top:826px" width="14" height="17"><rect x="0.5" y="0.5" width="13" height="16" fill="#f7d55c" stroke="#c9a02a"/><path d="M7 1v10" stroke="#777" stroke-width="1.6" stroke-dasharray="1.5 1.5"/><rect x="5.5" y="10" width="3" height="4" fill="#888"/></svg>
<div class="t" style="left:957px;top:832px;font-size:13.5px;color:#2b2b2b;letter-spacing:-0.35px">Body.zip</div>
<svg class="a" style="left:1109px;top:832px" width="12" height="8"><path d="M1 7 L6 1.5 L11 7" fill="none" stroke="#555" stroke-width="1.5"/></svg>
<svg class="a" style="left:1156px;top:827px" width="15" height="17"><path d="M0.5 2.5 H4 V0.8 H8 V2.5 H13.5 V15.5 H0.5 Z" fill="#f2ec50" stroke="#222"/><path d="M2.5 9.5 Q4 4 6 7 Q7.5 10 9 6 Q10.5 3 12 8 M2 12.5 Q7 10.5 12.5 13" fill="none" stroke="#222" stroke-width="1.1"/></svg>
<div class="t" style="left:1184px;top:832px;font-size:13.5px;color:#2b2b2b;letter-spacing:-0.77px">Body_Side_with_p....STL</div>
<svg class="a" style="left:1336px;top:832px" width="12" height="8"><path d="M1 7 L6 1.5 L11 7" fill="none" stroke="#555" stroke-width="1.5"/></svg>
<div class="a" style="left:1486px;top:821px;width:78px;height:28px;background:#fff;border:1px solid #c4c4c4;border-radius:2px"></div>
<div class="t" style="left:1502px;top:828px;font-size:13.5px;color:#2b2b2b;letter-spacing:-0.62px">Show all</div>
<svg class="a" style="left:1576px;top:829px" width="12" height="12"><path d="M1 1L11 11M11 1L1 11" stroke="#444" stroke-width="1.6"/></svg>

<!-- ===== TASKBAR ===== -->
<div id="task" class="a"></div>
<svg class="a" style="left:16px;top:871px" width="17" height="17" fill="#fff"><path d="M0 2.3 L6.8 1.4 V8 H0 Z M7.8 1.2 L16.5 0 V8 H7.8 Z M0 9 H6.8 V15.6 L0 14.7 Z M7.8 9 H16.5 V17 L7.8 15.8 Z"/></svg>
<svg class="a" style="left:61px;top:872px" width="22" height="16" fill="none" stroke="#fff" stroke-width="1.1"><rect x="5.5" y="0.5" width="11" height="14.5"/><path d="M3 2.5 H1 V13 H3 M19 2.5 H21 V13 H19"/></svg>
<svg class="a" style="left:110px;top:869px" width="23" height="22"><circle cx="14.5" cy="8" r="7" fill="#3d6a8e" stroke="#7aa8cc" stroke-width="1"/><path d="M9.5 13 L1.5 21" stroke="#8aa6bd" stroke-width="2.4" stroke-linecap="round"/></svg>
<svg class="a" style="left:159px;top:868px" width="24" height="24"><rect x="0.5" y="0.5" width="23" height="23" rx="2" fill="#dc4a2c" stroke="#f07a50"/><circle cx="12" cy="12" r="6.5" fill="none" stroke="#fff" stroke-width="2"/><path d="M12 7 V13" stroke="#fff" stroke-width="2.2"/></svg>
<svg class="a" style="left:210px;top:869px" width="21" height="21"><path d="M2 11 Q2 1 11 1 Q20 1 20 11 V12.5 H7 Q7.5 17 12.5 17.5 Q16.5 17.5 19.5 15.5 V19.5 Q16 21 12 21 Q2.5 21 2 12 Z M7 8.5 H15 Q14.5 4.5 11 4.5 Q7.5 4.5 7 8.5 Z" fill="#1a7fd6"/></svg>
<div class="a" style="left:245px;top:860px;width:48px;height:40px;background:#3c4a51"></div>
<div class="a" style="left:245px;top:898px;width:48px;height:2px;background:#76b9ed"></div>
<svg class="a" style="left:258px;top:869px" width="22" height="22"><circle cx="11" cy="11" r="10.5" fill="#db4437"/><path d="M11 11 L20.1 5.75 A10.5 10.5 0 0 1 11 21.5 Z" fill="#f4c20d"/><path d="M11 11 L11 21.5 A10.5 10.5 0 0 1 1.9 5.75 Z" fill="#0f9d58"/><circle cx="11" cy="11" r="4.8" fill="#fff"/><circle cx="11" cy="11" r="3.8" fill="#4285f4"/></svg>
<div class="a" style="left:298px;top:898px;width:40px;height:2px;background:#76b9ed"></div>
<svg class="a" style="left:310px;top:870px" width="17" height="20"><path d="M0.5 0.5 H11 L16.5 6 V19.5 H0.5 Z" fill="#fff"/><path d="M11 0.5 V6 H16.5" fill="#ddd"/></svg>
<div class="a" style="left:347px;top:898px;width:40px;height:2px;background:#76b9ed"></div>
<svg class="a" style="left:355px;top:868px" width="25" height="24"><rect x="0.5" y="3" width="22" height="20" fill="#e8d72c" stroke="#333"/><path d="M3 15 L7 9 L10 17 L14 8 L17 13 L20 11" fill="none" stroke="#222" stroke-width="1.4"/><path d="M12 16 L23 2 L25 3.5 L14 17.5 Z" fill="#1a3c8c"/></svg>
<svg class="a" style="left:1433px;top:874px" width="15" height="9"><path d="M1 8 L7.5 1.5 L14 8" fill="none" stroke="#fff" stroke-width="1.2"/></svg>
<svg class="a" style="left:1456px;top:872px" width="18" height="18" fill="none" stroke="#fff" stroke-width="1.1"><rect x="3.5" y="2.5" width="13" height="9"/><path d="M10 11.5 V14.5 M6 14.5 H14 M0.5 6.5 H3.5 M0.5 6.5 V16.5 H4"/></svg>
<svg class="a" style="left:1481px;top:872px" width="18" height="18" fill="none" stroke="#fff" stroke-width="1.1"><path d="M1 6.5 H4 L8.5 2.5 V15.5 L4 11.5 H1 Z"/><path d="M11 6 Q12.5 9 11 12 M13.5 4 Q16 9 13.5 14"/></svg>
<svg class="a" style="left:1505px;top:871px" width="17" height="19" fill="#fff"><path d="M0.5 0.5 H16.5 V13.5 H8 L4 18 V13.5 H0.5 Z"/><path d="M3 4 H14 M3 7 H14 M3 10 H11" stroke="#081b26" stroke-width="1.2"/></svg>
<div class="t" style="left:1535px;top:865px;font-size:13px;color:#fff;letter-spacing:-0.80px">10:15 AM</div>
<div class="t" style="left:1534px;top:882px;font-size:13px;color:#fff;letter-spacing:-0.64px">4/12/2017</div>
<div class="a" style="left:1594px;top:860px;width:1px;height:40px;background:#5a6a78"></div>

</body></html>
